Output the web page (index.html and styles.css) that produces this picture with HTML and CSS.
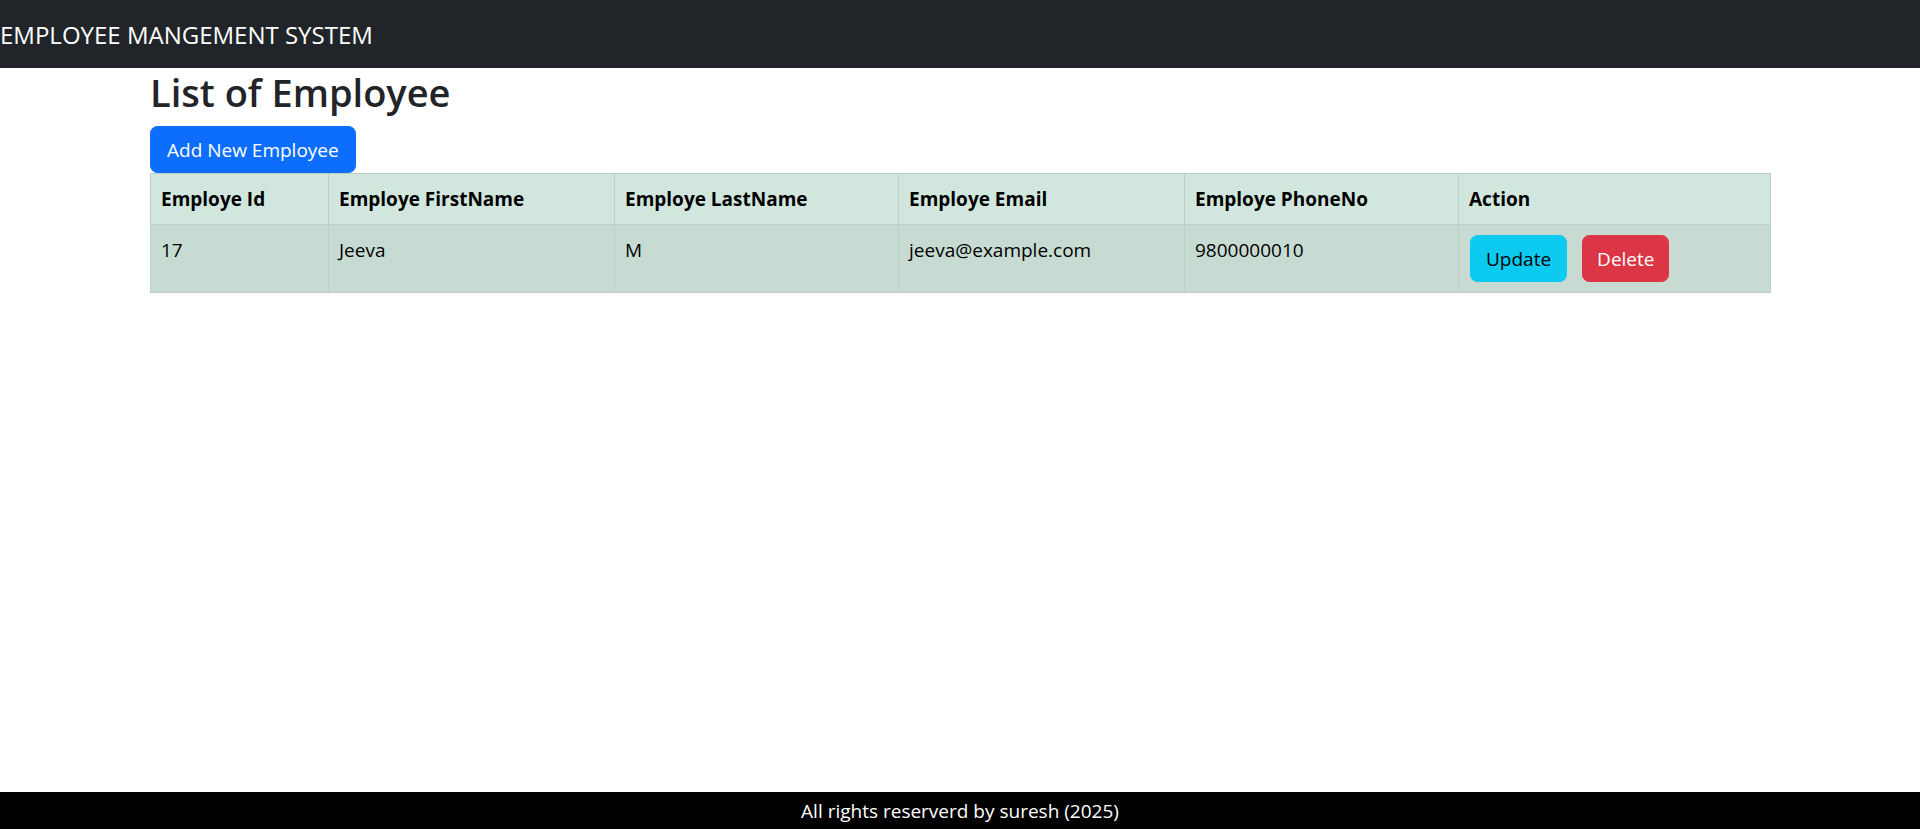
FILE: index.html
```html
<!DOCTYPE html>
<html lang="en">
<head>
<meta charset="utf-8">
<title>Employee Management System</title>
<link rel="stylesheet" href="styles.css">
</head>
<body>
<div class="page">
  <header class="navbar">
    <span class="brand">EMPLOYEE MANGEMENT SYSTEM</span>
  </header>
  <main class="container">
    <h2 class="title">List of Employee</h2>
    <button class="btn btn-primary">Add New Employee</button>
    <table class="emp-table">
      <thead>
        <tr>
          <th class="c-id">Employe Id</th>
          <th class="c-first">Employe FirstName</th>
          <th class="c-last">Employe LastName</th>
          <th class="c-email">Employe Email</th>
          <th class="c-phone">Employe PhoneNo</th>
          <th class="c-action">Action</th>
        </tr>
      </thead>
      <tbody>
        <tr>
          <td>17</td>
          <td>Jeeva</td>
          <td>M</td>
          <td>jeeva@example.com</td>
          <td>9800000010</td>
          <td class="actions"><button class="btn btn-info">Update</button><button class="btn btn-danger btn-gap">Delete</button></td>
        </tr>
      </tbody>
    </table>
  </main>
  <footer class="footer">All rights reserverd by suresh (2025)</footer>
</div>
</body>
</html>
```
FILE: styles.css
```css
* { box-sizing: border-box; }
html, body { margin: 0; padding: 0; }
body {
  font-family: "Open Sans", "Noto Sans", sans-serif;
  font-size: 19px;
  line-height: 30px;
  color: #212529;
  background: #fff;
}
.page {
  min-height: 100vh;
  display: flex;
  flex-direction: column;
}
.navbar {
  height: 68px;
  background: #212529;
  display: flex;
  align-items: center;
  flex-shrink: 0;
}
.brand {
  color: #fff;
  font-size: 24px;
  line-height: 37px;
}
.container {
  width: 1620px;
  margin: 0 auto;
  flex: 1;
}
.title {
  margin: 0 0 10px;
  font-size: 38px;
  line-height: 48px;
  font-weight: 600;
  color: #212529;
}
.btn {
  display: inline-block;
  font-family: inherit;
  font-size: 19px;
  line-height: 30px;
  padding: 7px 15px;
  height: 47px;
  border: 1px solid transparent;
  border-radius: 7.5px;
  cursor: pointer;
  vertical-align: middle;
}
.btn-primary { background: #0d6efd; border-color: #0d6efd; color: #fff; padding: 7px 16px; }
.btn-info { background: #0dcaf0; border-color: #0dcaf0; color: #000; }
.btn-danger { background: #dc3545; border-color: #dc3545; color: #fff; padding: 7px 14px; }
.btn-gap { margin-left: 15px; }
.emp-table {
  width: 1620px;
  border-collapse: collapse;
  table-layout: fixed;
  color: #000;
  margin: 0;
}
.emp-table th, .emp-table td {
  border: 1px solid #bcd0c7;
  padding: 10px;
  text-align: left;
  vertical-align: top;
}
.emp-table th {
  background: #d1e7dd;
  font-weight: 700;
}
.emp-table td {
  background: #c7dbd2;
  font-weight: 400;
}
.emp-table td.actions { padding-left: 11px; }
.c-id { width: 178px; }
.c-first { width: 286px; }
.c-last { width: 284px; }
.c-email { width: 286px; }
.c-phone { width: 274px; }
.c-action { width: 312px; }
.footer {
  height: 37px;
  background: #000;
  color: #fff;
  display: flex;
  align-items: center;
  justify-content: center;
  font-size: 19px;
  flex-shrink: 0;
}
```
